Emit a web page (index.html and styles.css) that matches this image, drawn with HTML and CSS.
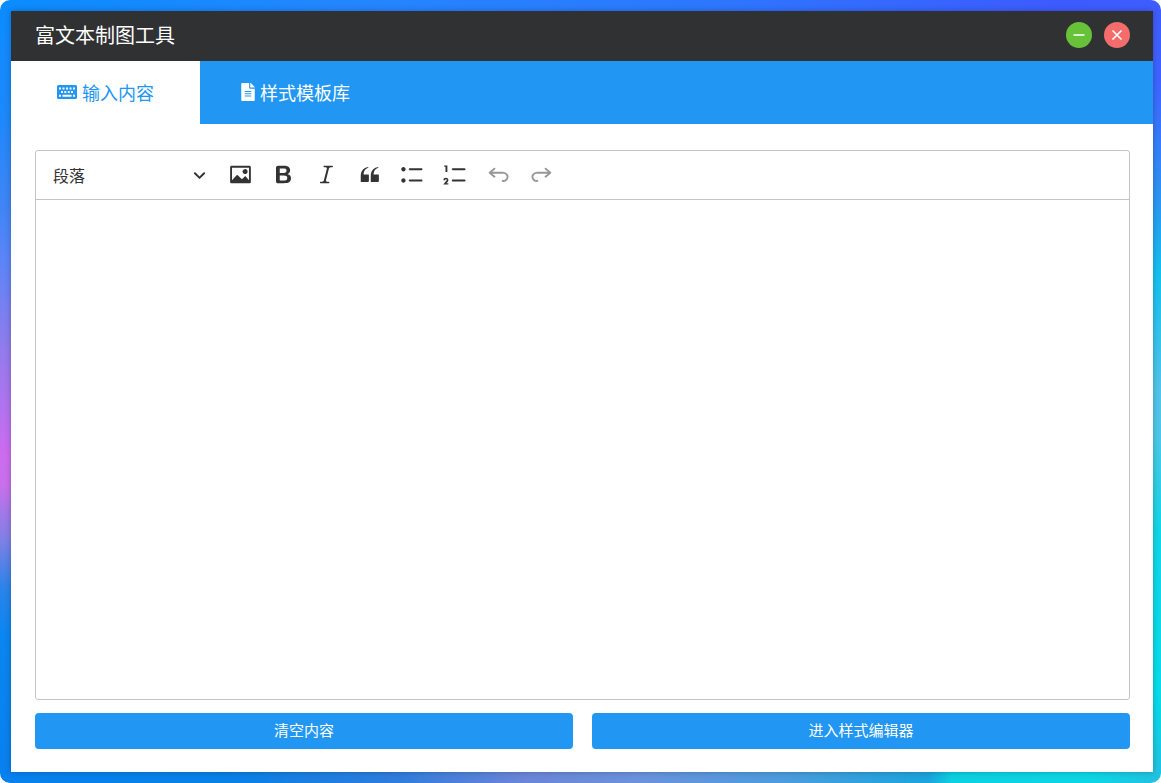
FILE: index.html
```
<!DOCTYPE html>
<html lang="zh-CN">
<head>
<meta charset="utf-8">
<meta name="viewport" content="width=device-width, initial-scale=1">
<title>富文本制图工具</title>
<link rel="stylesheet" href="styles.css">
</head>
<body>
<div class="desktop">
  <div class="window">
    <header class="titlebar">
      <h1 class="title">富文本制图工具</h1>
      <button class="control control-min" type="button" aria-label="最小化">
        <svg viewBox="0 0 14 14"><path d="M1.500 7h11"/></svg>
      </button>
      <button class="control control-close" type="button" aria-label="关闭">
        <svg viewBox="0 0 14 14"><path d="M2.500 2.500l9 9M11.500 2.500l-9 9"/></svg>
      </button>
    </header>
    <nav class="tabs">
      <button class="tab tab-active" type="button">
        <svg class="icon-keyboard" viewBox="0 0 20 14"><path fill-rule="evenodd" d="M1.500 0h17A1.500 1.500 0 0 1 20 1.500v11a1.500 1.500 0 0 1-1.500 1.500h-17A1.500 1.500 0 0 1 0 12.500v-11A1.500 1.500 0 0 1 1.500 0zM2 2.400v2h2v-2zM5.500 2.400v2h2v-2zM9 2.400v2h2v-2zM12.500 2.400v2h2v-2zM16 2.400v2h2v-2zM4 6v2h2V6zM7.300 6v2h2V6zM10.700 6v2h2V6zM14 6v2h2V6zM2 9.700v2h2v-2zM5.500 9.700v2h9v-2zM16 9.700v2h2v-2z"/></svg>
        <span>输入内容</span>
      </button>
      <button class="tab" type="button">
        <svg class="icon-file" viewBox="0 0 384 512"><path d="M224 136V0H24C10.700 0 0 10.700 0 24v464c0 13.300 10.700 24 24 24h336c13.300 0 24-10.700 24-24V160H248c-13.200 0-24-10.800-24-24zm64 236c0 6.600-5.400 12-12 12H108c-6.600 0-12-5.400-12-12v-8c0-6.600 5.400-12 12-12h168c6.600 0 12 5.400 12 12v8zm0-64c0 6.600-5.400 12-12 12H108c-6.600 0-12-5.400-12-12v-8c0-6.600 5.400-12 12-12h168c6.600 0 12 5.400 12 12v8zm0-72v8c0 6.600-5.400 12-12 12H108c-6.600 0-12-5.400-12-12v-8c0-6.600 5.400-12 12-12h168c6.600 0 12 5.400 12 12zm96-114.100v6.100H256V0h6.100c6.400 0 12.500 2.500 17 7l97.900 98c4.500 4.500 7 10.600 7 16.900z"/></svg>
        <span>样式模板库</span>
      </button>
    </nav>
    <main class="content">
      <section class="editor">
        <div class="toolbar">
          <div class="heading">
            <select class="heading-select" aria-label="标题"><option>段落</option></select>
            <svg class="arrow" viewBox="0 0 10 10"><path d="M.941 4.523a.75.75 0 1 1 1.060-1.060l3.006 3.005 3.005-3.005a.75.75 0 1 1 1.060 1.060l-3.549 3.550a.75.75 0 0 1-1.168-.136L.941 4.523z"/></svg>
          </div>
          <button class="tool" type="button" aria-label="插入图像"><svg viewBox="0 0 20 20"><path d="M6.910 10.540c.26-.23.64-.21.88.03l3.360 3.140 2.230-2.060a.64.64 0 0 1 .87 0l2.520 2.970V4.500H3.200v10.120l3.710-4.080zm10.270-7.510c.6 0 1.090.47 1.090 1.050v11.840c0 .59-.49 1.060-1.090 1.060H2.790c-.6 0-1.090-.47-1.090-1.060V4.080c0-.58.49-1.050 1.100-1.050h14.380zm-5.220 5.560a1.960 1.960 0 1 1 3.400-1.960 1.960 1.960 0 0 1-3.400 1.960z"/></svg></button>
          <button class="tool" type="button" aria-label="加粗"><svg viewBox="0 0 20 20"><path d="M10.187 17H5.773c-.637 0-1.092-.138-1.364-.415-.273-.277-.409-.718-.409-1.323V4.738c0-.617.14-1.062.419-1.332.279-.27.73-.406 1.354-.406h4.680c.69 0 1.288.041 1.793.124.506.083.96.242 1.360.478.341.197.644.447.906.75a3.262 3.262 0 0 1 .808 2.162c0 1.401-.722 2.426-2.167 3.075C15.050 10.175 16 11.315 16 13.010a3.756 3.756 0 0 1-2.296 3.504 6.100 6.100 0 0 1-1.517.377c-.571.073-1.238.11-2 .11zm-.217-6.217H7v4.087h3.069c1.977 0 2.965-.69 2.965-2.072 0-.707-.256-1.220-.768-1.537-.512-.319-1.277-.478-2.296-.478zM7 5.130v3.619h2.606c.729 0 1.292-.067 1.690-.2a1.600 1.600 0 0 0 .91-.765c.165-.267.247-.566.247-.897 0-.707-.26-1.176-.778-1.409-.519-.232-1.310-.348-2.375-.348H7z"/></svg></button>
          <button class="tool" type="button" aria-label="倾斜"><svg viewBox="0 0 20 20"><path d="m9.586 14.633.021.004c-.036.335.095.655.393.962.082.083.173.15.274.201h1.474a.6.6 0 1 1 0 1.200H5.304a.6.6 0 0 1 0-1.200h1.150c.474-.07.809-.182 1.005-.334.157-.122.291-.32.404-.597l2.416-9.550a1.053 1.053 0 0 0-.281-.823 1.120 1.120 0 0 0-.442-.296H8.150a.6.6 0 0 1 0-1.200h6.443a.6.6 0 1 1 0 1.200h-1.195c-.376.056-.65.155-.823.296-.215.175-.423.439-.623.79l-2.366 9.347z"/></svg></button>
          <button class="tool" type="button" aria-label="块引用"><svg viewBox="0 0 20 20"><path d="M3 10.423a6.500 6.500 0 0 1 6.056-6.408l.038.67C6.448 5.423 5.354 7.663 5.220 10H9c.552 0 .5.432.5.986v4.511c0 .554-.448.503-1 .503h-5c-.552 0-.5-.449-.5-1.003v-4.574zm8 0a6.500 6.500 0 0 1 6.056-6.408l.038.67c-2.646.739-3.740 2.979-3.873 5.315H17c.552 0 .5.432.5.986v4.511c0 .554-.448.503-1 .503h-5c-.552 0-.5-.449-.5-1.003v-4.574z"/></svg></button>
          <button class="tool" type="button" aria-label="项目符号列表"><svg viewBox="0 0 20 20"><path d="M7 5.750c0 .414.336.75.75.75h9.500a.75.75 0 1 0 0-1.500h-9.500a.75.75 0 0 0-.75.75zm-6 0C1 4.784 1.777 4 2.750 4c.966 0 1.750.777 1.750 1.750 0 .966-.777 1.750-1.750 1.750C1.784 7.500 1 6.723 1 5.750zm6 9c0 .414.336.75.75.75h9.500a.75.75 0 1 0 0-1.500h-9.500a.75.75 0 0 0-.75.75zm-6 0c0-.966.777-1.750 1.750-1.750.966 0 1.750.777 1.750 1.750 0 .966-.777 1.750-1.750 1.750-.966 0-1.750-.777-1.750-1.750z"/></svg></button>
          <button class="tool" type="button" aria-label="项目编号列表"><svg viewBox="0 0 20 20"><path d="M7 5.750c0 .414.336.75.75.75h9.500a.75.75 0 1 0 0-1.500h-9.500a.75.75 0 0 0-.75.75zM3.500 3v5H2V3.700H1v-1h2.500V3zM.343 17.857l2.590-3.257H2.920a.6.6 0 1 0-1.040 0H.302a2 2 0 1 1 3.995 0h-.001c-.048.405-.16.734-.333.988-.175.254-.59.692-1.244 1.312H4.300v1h-4l.043-.043zM7 14.750a.75.75 0 0 1 .75-.75h9.500a.75.75 0 1 1 0 1.500h-9.500a.75.75 0 0 1-.75-.75z"/></svg></button>
          <button class="tool" type="button" aria-label="撤销" disabled><svg viewBox="0 0 20 20"><path d="m5.042 9.367 2.189 1.837a.75.75 0 0 1-.965 1.149l-3.788-3.180a.747.747 0 0 1-.21-.284.75.75 0 0 1 .17-.945L6.230 4.762a.75.75 0 1 1 .964 1.150L4.863 7.866h8.917A.75.75 0 0 1 14 7.900a4 4 0 1 1-1.477 7.718l.344-1.489a2.500 2.500 0 1 0 1.094-4.730l.008-.032H5.042z"/></svg></button>
          <button class="tool" type="button" aria-label="重做" disabled><svg viewBox="0 0 20 20"><path d="m14.958 9.367-2.189 1.837a.75.75 0 0 0 .965 1.149l3.788-3.180a.747.747 0 0 0 .21-.284.75.75 0 0 0-.17-.945L13.770 4.762a.75.75 0 1 0-.964 1.150l2.331 1.954H6.220A.75.75 0 0 0 6 7.900a4 4 0 1 0 1.477 7.718l-.344-1.489A2.500 2.500 0 1 1 6.039 9.400l-.008-.032h8.927z"/></svg></button>
        </div>
        <textarea class="editable" aria-label="输入内容"></textarea>
      </section>
      <div class="actions">
        <button class="action" type="button">清空内容</button>
        <button class="action" type="button">进入样式编辑器</button>
      </div>
    </main>
  </div>
</div>
</body>
</html>
```
FILE: styles.css
```
* {
  box-sizing: border-box;
}

body {
  margin: 0;
  background: #fff;
  font-family: "Noto Sans CJK SC", sans-serif;
}

button,
select,
textarea {
  margin: 0;
  border: 0;
  padding: 0;
  font-family: inherit;
}

.desktop {
  display: flex;
  min-height: 100vh;
  padding: 11px 8px 11px 11px;
  border-radius: 10px;
  overflow: hidden;
  background:
    linear-gradient(90deg, #0a8cff, #2486ff 30%, #2c78ff 60%, #3c5cff 90%, #3f5cff) top / 100% 11px no-repeat,
    linear-gradient(90deg, #0880ee, #0880e6 20%, #2f7cdc 34%, #6a85d6 45%, #6a92dc 55%, #4a9cdc 68%, #1aa4dc 80%, #0cd0e0 82%, #0cd6e4 94%, #22c0e0) bottom / 100% 11px no-repeat,
    linear-gradient(180deg, #0a8cff, #1e88fa 15%, #4285f5 27%, #5a85f8 33%, #8f7cec 44%, #cc6cf0 58%, #c870ea 62%, #7f80e6 69%, #2c84ea 75%, #0a86f0 81%, #0880ee) left / 11px 100% no-repeat,
    linear-gradient(180deg, #3f5cff, #3f62ff 10%, #3384f8 20%, #2a98f2 26%, #14c0f0 35%, #52c4ea 50%, #4cc8e8 56%, #10d6e6 68%, #06dcea 88%, #22c0e0) right / 8px 100% no-repeat;
}

.window {
  display: flex;
  flex: 1;
  flex-direction: column;
  background: #fff;
  box-shadow: 0 0 6px rgba(0, 0, 0, 0.25);
}

.titlebar {
  display: flex;
  align-items: center;
  gap: 12px;
  height: 50px;
  padding: 0 23px 2px 24px;
  background: #303133;
}

.title {
  flex: 1;
  margin: 0;
  color: #fff;
  font-size: 20px;
  font-weight: 400;
  line-height: 30px;
}

.control {
  display: grid;
  place-items: center;
  width: 26px;
  height: 26px;
  border-radius: 50%;
}

.control svg {
  width: 14px;
  height: 14px;
  fill: none;
  stroke: #fff;
  stroke-width: 1.6;
}

.control-min {
  background: #67c23a;
}

.control-close {
  background: #f56c6c;
}

.tabs {
  display: flex;
  height: 63px;
  background: #2196f3;
}

.tab {
  display: flex;
  align-items: center;
  justify-content: center;
  gap: 5px;
  min-width: 189px;
  padding-bottom: 2px;
  background: transparent;
  color: #fff;
  font-size: 18px;
  line-height: 28px;
}

.tab + .tab {
  min-width: 191px;
}

.tab-active {
  background: #fff;
  color: #2196f3;
}

.tab svg {
  fill: currentColor;
}

.icon-keyboard {
  width: 20px;
  height: 14px;
}

.icon-file {
  width: 14px;
  height: 18px;
}

.content {
  display: flex;
  flex: 1;
  flex-direction: column;
  gap: 13px;
  padding: 26px 23px 23px 24px;
}

.editor {
  display: flex;
  flex: 1;
  flex-direction: column;
  border: 1px solid #c4c4c4;
  border-radius: 3px;
}

.toolbar {
  display: flex;
  align-items: center;
  gap: 4px;
  height: 49px;
  padding: 0 4px 1px;
  border-bottom: 1px solid #c4c4c4;
}

.heading {
  display: grid;
  align-items: center;
  width: 177px;
}

.heading-select,
.arrow {
  grid-area: 1 / 1;
}

.heading-select {
  width: 100%;
  height: 39px;
  padding-left: 13px;
  appearance: none;
  background: transparent;
  color: #333;
  font-size: 16px;
}

.arrow {
  justify-self: end;
  width: 13px;
  height: 13px;
  margin-right: 11px;
  fill: #333;
  pointer-events: none;
}

.tool {
  display: grid;
  place-items: center;
  width: 39px;
  height: 39px;
  background: transparent;
}

.tool svg {
  width: 25px;
  height: 25px;
  fill: #333;
}

.tool:disabled svg {
  opacity: 0.5;
}

.editable {
  flex: 1;
  width: 100%;
  padding: 12px 16px;
  outline: 0;
  resize: none;
  background: transparent;
  font-size: 16px;
}

.actions {
  display: grid;
  grid-template-columns: 1fr 1fr;
  gap: 19px;
}

.action {
  height: 36px;
  padding-bottom: 2px;
  border-radius: 4px;
  background: #2196f3;
  color: #fff;
  font-size: 15px;
  line-height: 24px;
}
```
